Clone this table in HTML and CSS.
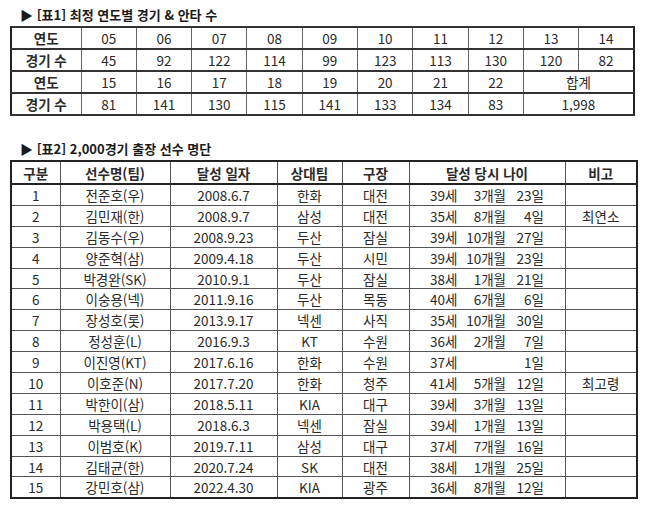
FILE: index.html
```html
<!DOCTYPE html>
<html lang="ko">
<head>
<meta charset="utf-8">
<title>최정 기록</title>
<link rel="stylesheet" href="styles.css">
</head>
<body>
<div class="page">
  <h2 class="title">▶ [표1] 최정 연도별 경기 &amp; 안타 수</h2>
  <table class="t1">
    <colgroup><col class="c-head"><col span="10" class="c-data"></colgroup>
    <tr><th>연도</th><td>05</td><td>06</td><td>07</td><td>08</td><td>09</td><td>10</td><td>11</td><td>12</td><td>13</td><td>14</td></tr>
    <tr><th>경기 수</th><td>45</td><td>92</td><td>122</td><td>114</td><td>99</td><td>123</td><td>113</td><td>130</td><td>120</td><td>82</td></tr>
    <tr><th>연도</th><td>15</td><td>16</td><td>17</td><td>18</td><td>19</td><td>20</td><td>21</td><td>22</td><td colspan="2">합계</td></tr>
    <tr><th>경기 수</th><td>81</td><td>141</td><td>130</td><td>115</td><td>141</td><td>133</td><td>134</td><td>83</td><td colspan="2">1,998</td></tr>
  </table>

  <h2 class="title title2">▶ [표2] 2,000경기 출장 선수 명단</h2>
  <table class="t2">
    <colgroup>
      <col class="w1"><col class="w2"><col class="w3"><col class="w4"><col class="w5"><col class="w6"><col class="w7">
    </colgroup>
    <thead>
      <tr><th>구분</th><th>선수명(팀)</th><th>달성 일자</th><th>상대팀</th><th>구장</th><th>달성 당시 나이</th><th>비고</th></tr>
    </thead>
    <tbody>
      <tr><td>1</td><td>전준호(우)</td><td>2008.6.7</td><td>한화</td><td>대전</td><td><span class="age"><span class="y">39세</span><span class="m">3개월</span><span class="d">23일</span></span></td><td></td></tr>
      <tr><td>2</td><td>김민재(한)</td><td>2008.9.7</td><td>삼성</td><td>대전</td><td><span class="age"><span class="y">35세</span><span class="m">8개월</span><span class="d">4일</span></span></td><td>최연소</td></tr>
      <tr><td>3</td><td>김동수(우)</td><td>2008.9.23</td><td>두산</td><td>잠실</td><td><span class="age"><span class="y">39세</span><span class="m">10개월</span><span class="d">27일</span></span></td><td></td></tr>
      <tr><td>4</td><td>양준혁(삼)</td><td>2009.4.18</td><td>두산</td><td>시민</td><td><span class="age"><span class="y">39세</span><span class="m">10개월</span><span class="d">23일</span></span></td><td></td></tr>
      <tr><td>5</td><td>박경완(SK)</td><td>2010.9.1</td><td>두산</td><td>잠실</td><td><span class="age"><span class="y">38세</span><span class="m">1개월</span><span class="d">21일</span></span></td><td></td></tr>
      <tr><td>6</td><td>이숭용(넥)</td><td>2011.9.16</td><td>두산</td><td>목동</td><td><span class="age"><span class="y">40세</span><span class="m">6개월</span><span class="d">6일</span></span></td><td></td></tr>
      <tr><td>7</td><td>장성호(롯)</td><td>2013.9.17</td><td>넥센</td><td>사직</td><td><span class="age"><span class="y">35세</span><span class="m">10개월</span><span class="d">30일</span></span></td><td></td></tr>
      <tr><td>8</td><td>정성훈(L)</td><td>2016.9.3</td><td>KT</td><td>수원</td><td><span class="age"><span class="y">36세</span><span class="m">2개월</span><span class="d">7일</span></span></td><td></td></tr>
      <tr><td>9</td><td>이진영(KT)</td><td>2017.6.16</td><td>한화</td><td>수원</td><td><span class="age"><span class="y">37세</span><span class="m"></span><span class="d">1일</span></span></td><td></td></tr>
      <tr><td>10</td><td>이호준(N)</td><td>2017.7.20</td><td>한화</td><td>청주</td><td><span class="age"><span class="y">41세</span><span class="m">5개월</span><span class="d">12일</span></span></td><td>최고령</td></tr>
      <tr><td>11</td><td>박한이(삼)</td><td>2018.5.11</td><td>KIA</td><td>대구</td><td><span class="age"><span class="y">39세</span><span class="m">3개월</span><span class="d">13일</span></span></td><td></td></tr>
      <tr><td>12</td><td>박용택(L)</td><td>2018.6.3</td><td>넥센</td><td>잠실</td><td><span class="age"><span class="y">39세</span><span class="m">1개월</span><span class="d">13일</span></span></td><td></td></tr>
      <tr><td>13</td><td>이범호(K)</td><td>2019.7.11</td><td>삼성</td><td>대구</td><td><span class="age"><span class="y">37세</span><span class="m">7개월</span><span class="d">16일</span></span></td><td></td></tr>
      <tr><td>14</td><td>김태균(한)</td><td>2020.7.24</td><td>SK</td><td>대전</td><td><span class="age"><span class="y">38세</span><span class="m">1개월</span><span class="d">25일</span></span></td><td></td></tr>
      <tr><td>15</td><td>강민호(삼)</td><td>2022.4.30</td><td>KIA</td><td>광주</td><td><span class="age"><span class="y">36세</span><span class="m">8개월</span><span class="d">12일</span></span></td><td></td></tr>
    </tbody>
  </table>
</div>
</body>
</html>
```

FILE: styles.css
```css
html, body {
  margin: 0;
  padding: 0;
  background: #ffffff;
}

body {
  font-family: "Noto Sans CJK KR", "Noto Sans", sans-serif;
  color: #2a2a2a;
  font-size: 13.5px;
}

.page {
  padding: 4px 12px 0 10px;
}

.title {
  margin: 0;
  padding-left: 10px;
  font-size: 13px;
  font-weight: bold;
  line-height: 22px;
  color: #1a1a1a;
}

.title2 {
  margin-top: 22px;
}

table {
  border-collapse: collapse;
  table-layout: fixed;
  border: 2px solid #222222;
}

th, td {
  padding: 0;
  text-align: center;
  line-height: 18px;
  white-space: nowrap;
  overflow: hidden;
}

th {
  font-weight: bold;
}

/* Table 1 */
.t1 {
  width: 624px;
}

.t1 .c-head { width: 70px; }
.t1 .c-data { width: 55.3px; }

.t1 th, .t1 td {
  height: 20px;
  border-top: 2px solid #333333;
  border-bottom: 2px solid #333333;
  border-left: 1px solid #666666;
  border-right: 1px solid #666666;
}

/* Table 2 */
.t2 {
  width: 626px;
}

.t2 .w1 { width: 49px; }
.t2 .w2 { width: 110px; }
.t2 .w3 { width: 107px; }
.t2 .w4 { width: 65px; }
.t2 .w5 { width: 67px; }
.t2 .w6 { width: 156px; }
.t2 .w7 { width: 72px; }

.t2 th, .t2 td {
  border: 1px solid #555555;
}

.t2 th {
  height: 21px;
  border-bottom: 2px solid #222222;
}

.t2 td {
  height: 19.9px;
}

.age {
  display: inline-flex;
  width: 114px;
}

.age .y {
  width: 33px;
  text-align: left;
}

.age .m {
  width: 43px;
  text-align: right;
}

.age .d {
  width: 38px;
  text-align: right;
}
```
